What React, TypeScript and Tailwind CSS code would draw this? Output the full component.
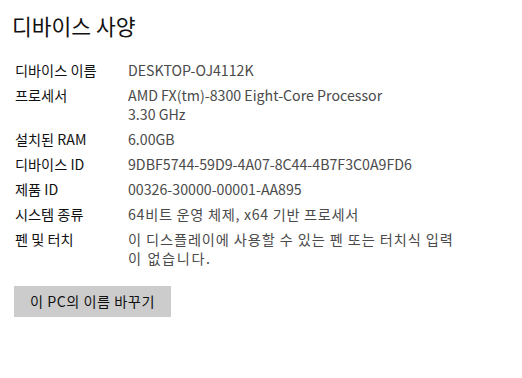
import React from "react";

type Line = { t: string; c?: string };

const rows: [string, Line[]][] = [
  ["디바이스 이름", [{ t: "DESKTOP-OJ4112K" }]],
  ["프로세서", [{ t: "AMD FX(tm)-8300 Eight-Core Processor" }, { t: "3.30 GHz" }]],
  ["설치된 RAM", [{ t: "6.00GB" }]],
  ["디바이스 ID", [{ t: "9DBF5744-59D9-4A07-8C44-4B7F3C0A9FD6" }]],
  ["제품 ID", [{ t: "00326-30000-00001-AA895" }]],
  ["시스템 종류", [{ t: "64비트 운영 체제, x64 기반 프로세서", c: "tracking-[0.7px]" }]],
  [
    "펜 및 터치",
    [
      { t: "이 디스플레이에 사용할 수 있는 펜 또는 터치식 입력", c: "tracking-[0.9px]" },
      { t: "이 없습니다.", c: "tracking-[1.6px]" },
    ],
  ],
];

export default function App() {
  return (
    <div
      className="w-[522px] h-[378px] bg-white overflow-hidden"
      style={{ fontFamily: '"Noto Sans CJK KR", "Noto Sans", sans-serif' }}
    >
      <div className="pl-[12px] pt-[12px] text-[21.5px] leading-[28px] text-[#111]">디바이스 사양</div>
      <div className="flex flex-col gap-[6px] pl-[15px] pt-[21px] text-[14.2px] leading-[19px]">
        {rows.map(([k, v]) => (
          <div key={k} className="flex">
            <div className="w-[113px] shrink-0 text-[#111]">{k}</div>
            <div className="text-[#4a4a4a]">
              {v.map((l) => (
                <div key={l.t} className={l.c}>
                  {l.t}
                </div>
              ))}
            </div>
          </div>
        ))}
      </div>
      <div className="pl-[14px] pt-[18px]">
        <button className="w-[157px] h-[31px] bg-[#cccccc] text-[14.2px] text-[#111] tracking-[0.5px] flex items-center justify-center">
          이 PC의 이름 바꾸기
        </button>
      </div>
    </div>
  );
}
